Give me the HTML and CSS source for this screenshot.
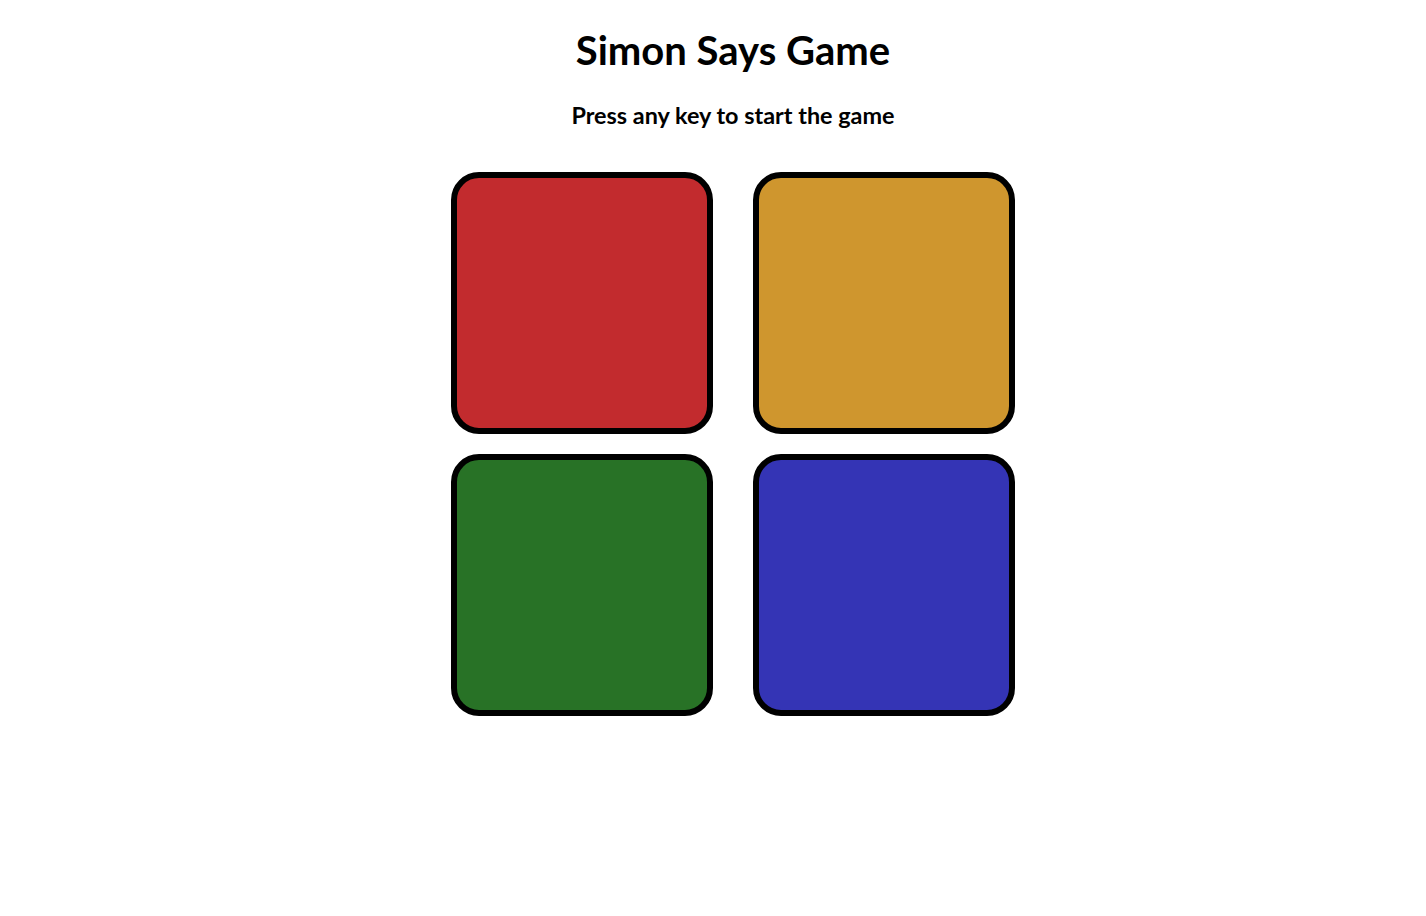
FILE: index.html
```html
<!DOCTYPE html>
<html lang="en">
<head>
<meta charset="utf-8">
<title>Simon Says Game</title>
<link rel="stylesheet" href="styles.css">
</head>
<body>
<h1 class="title">Simon Says Game</h1>
<h3 class="subtitle">Press any key to start the game</h3>
<div class="board">
  <div class="pad red"></div>
  <div class="pad yellow"></div>
  <div class="pad green"></div>
  <div class="pad blue"></div>
</div>
</body>
</html>
```
FILE: styles.css
```css
body {
  margin: 0;
  padding-left: 40px;
  text-align: center;
  font-family: Lato, "Liberation Sans", sans-serif;
  font-size: 20px;
  color: #000;
  background: #fff;
}
.title {
  font-size: 40px;
  font-weight: 700;
  line-height: 48px;
  margin: 26px 0 0;
}
.subtitle {
  font-size: 23.4px;
  font-weight: 700;
  line-height: 28px;
  margin: 27px 0 0;
}
.board {
  display: grid;
  grid-template-columns: 262px 262px;
  column-gap: 40px;
  row-gap: 20px;
  justify-content: center;
  margin-top: 43px;
}
.pad {
  box-sizing: border-box;
  width: 262px;
  height: 262px;
  border: 6px solid #000;
  border-radius: 28px;
}
.red { background: #c22b2e; }
.yellow { background: #cf962e; }
.green { background: #287226; }
.blue { background: #3434b5; }
```
